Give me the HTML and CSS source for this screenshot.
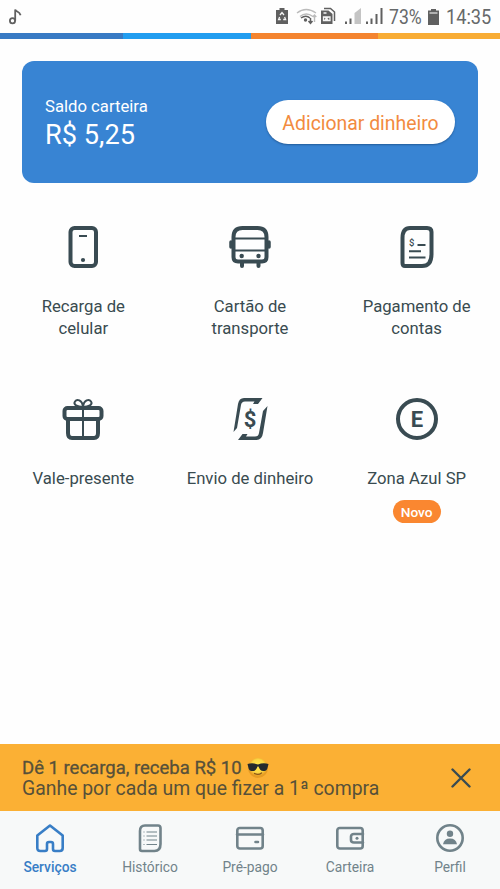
FILE: index.html
```html
<!DOCTYPE html>
<html lang="pt-BR">
<head>
<meta charset="utf-8">
<title>Serviços</title>
<link rel="stylesheet" href="styles.css">
</head>
<body>
<header class="status">
  <svg class="note" width="14" height="18" viewBox="0 0 14 18"><circle cx="4.500" cy="12.700" r="2.600"/><path d="M7.200 12.700V1.500C7.800 4 11.300 3 12.600 7.200"/></svg>
  <div class="indicators">
    <svg width="107" height="20" viewBox="0 0 107 20">
      <path class="solid" d="M0 3h3.500V1h5v2H12v14H0z"/><path class="cut" d="M4 8L6 5.500 8 8M8.600 10l1 2.500H7.200M4.800 12.500H2.600l1-2.500"/>
      <path class="light" d="M21 6Q30-1 40 6M24 9.500Q30 4.500 37 9.500M38.500 8v7M36.700 10l1.800-2 1.800 2"/><path class="line" d="M25 11Q30 7.500 34 11M34.500 11v5M32.500 14l2 2.300 2-2.300"/><circle class="solid" cx="29.500" cy="13" r="1.700"/>
      <path class="line" d="M48 1.500h6.500L58.500 5v9"/><path class="solid" d="M45 3.500h7.500L56.500 7v10H45z"/><path class="cut" d="M47.500 10h6.500v3.500h-6.500zM48.500 10l4 3.500M52.500 10l-4 3.500M47.500 6h3"/>
      <path class="solid" d="M69 14.500h2V17h-2zM73.500 11.500h2V17h-2z"/><path class="pale" d="M78.500 6L85 1v16h-6.500z"/>
      <path class="solid" d="M90 14.500h2V17h-2zM94.500 11.500h2V17h-2zM99.500 7h2v10h-2zM104.500 1h2v16h-2z"/>
    </svg>
    <span class="percent">73%</span>
    <svg width="12" height="18" viewBox="0 0 12 18"><path class="solid" d="M0 2.500h3V1h5v1.500h3V17H0z"/><path class="paleline" d="M1.500 5h8"/></svg>
    <span class="clock">14:35</span>
  </div>
</header>
<div class="stripe"><i></i><i></i><i></i><i></i></div>
<main>
  <section class="wallet">
    <div class="funds"><div class="wallet-label">Saldo carteira</div><div class="balance">R$ 5,25</div></div>
    <button class="add">Adicionar dinheiro</button>
  </section>
  <section class="services">
    <a class="service"><svg width="44" height="44" viewBox="0 0 44 44"><rect class="bold" x="9.500" y="3" width="25.500" height="38" rx="4"/><path class="thin" d="M18 11h8"/><circle class="dot" cx="22" cy="35" r="2.100"/></svg><span>Recarga de celular</span></a>
    <a class="service"><svg width="44" height="44" viewBox="0 0 44 44"><path class="bold" d="M5.500 32V12Q5.500 3 14.500 3h15Q38.500 3 38.500 12v20q0 4.500-4.500 4.500H10Q5.500 36.500 5.500 32zM14 37v4M30.500 37v4"/><path class="thin" d="M5 13.500h34M5 25.500h34"/><path class="bold mirror" d="M3 17v5M41 17v5"/><circle class="dot" cx="13.700" cy="31" r="2.200"/><circle class="dot" cx="30.500" cy="31" r="2.200"/></svg><span>Cartão de transporte</span></a>
    <a class="service"><svg width="44" height="44" viewBox="0 0 44 44"><path class="bold" d="M7.500 13Q7.500 3 15 3h17q4.500 0 4.500 4v22Q36.500 41 27 41H10q-2.500 0-2.500-3z"/><path class="thin" d="M22.500 20h8M14 26.300h12M14 32.500h16.500"/><text class="bill-dollar" x="16.800" y="20.500">$</text></svg><span>Pagamento de contas</span></a>
    <a class="service"><svg width="44" height="44" viewBox="0 0 44 44"><rect class="bold" x="3.500" y="11" width="37" height="11" rx="3"/><path class="bold" d="M7 22v14Q7 41 11 41h22q4 0 4-5V22"/><path class="thin" d="M22 11v30M22 10C16 10 12 7.500 14 4.500s7-1.500 8 4.500c1-6 6-7.500 8-4.500s-2 5.500-8 5.500z"/></svg><span>Vale-presente</span></a>
    <a class="service"><svg width="44" height="44" viewBox="0 0 44 44"><path class="dot" d="M5.500 35L10 7Q11 1 16 1h18.500l-4.500 6h-5l1.500-2.500H17Q13.500 4.500 13 8L9 31zM39.500 9L35 36Q34 43 28.500 43H10l4.500-6h5L18 39.500h9q3.500 0 4-3.500L35 14z"/><text class="dollar" transform="translate(22 29.800)">$</text></svg><span>Envio de dinheiro</span></a>
    <a class="service"><svg width="44" height="44" viewBox="0 0 44 44"><circle class="bold" cx="22" cy="22" r="19"/><text class="zone" x="22" y="30">E</text></svg><span>Zona Azul SP</span><b class="new">Novo</b></a>
  </section>
</main>
<aside class="promo">
  <div><div class="promo-title">Dê 1 recarga, receba R$ 10
    <svg class="emoji" width="22" height="22" viewBox="0 0 22 22"><defs><radialGradient id="face" cx=".5" cy=".4"><stop offset="0" stop-color="#ffe84c"/><stop offset=".65" stop-color="#fcd744"/><stop offset="1" stop-color="#e79c23"/></radialGradient></defs><circle cx="11" cy="11" r="10" fill="url(#face)"/><path fill="#242b2e" d="M.500 7Q6 5.500 11 7.500 16 5.500 21.500 7l-.5 2c-.8 4-1.500 5-4.500 5-3 0-4-2-5-4.500h-1C9.500 12 8.500 14 5.500 14 2.500 14 1.800 13 1 9z"/><path fill="none" stroke="#8b5817" stroke-linecap="round" stroke-width="1.300" d="M7.500 16.500q4 2 7-.5"/></svg></div>
  <div class="promo-text">Ganhe por cada um que fizer a 1ª compra</div></div>
  <svg class="close" width="20" height="20" viewBox="0 0 20 20"><path d="M1.500 1.500l17 17M18.500 1.500l-17 17"/></svg>
</aside>
<nav>
  <a class="tab active"><svg width="30" height="30" viewBox="0 0 30 30"><path d="M2.300 12.500L15 2.500l12.700 10V25q0 3-3 3H20q-2 0-2-2v-5q0-2-2-2h-2q-2 0-2 2v5q0 2-2 2H5.300q-3 0-3-3z"/></svg><span>Serviços</span></a>
  <a class="tab"><svg width="30" height="30" viewBox="0 0 30 30"><path d="M5 8Q5 2.500 10 2.500h13q2.500 0 2.500 2.500v16q0 7-6 7H7q-2 0-2-2z"/><path class="fine" d="M11.500 9h10.500M11.500 13h10.500M11.500 17h10.500M11.500 21.500h10.500M8.500 9h1M8.500 13h1M8.500 17h1M8.500 21.500h1"/></svg><span>Histórico</span></a>
  <a class="tab"><svg width="30" height="30" viewBox="0 0 30 30"><rect x="2.300" y="5" width="25.400" height="20.500" rx="2.500"/><path d="M2 11.500h26M20.500 19h2.500"/></svg><span>Pré-pago</span></a>
  <a class="tab"><svg width="30" height="30" viewBox="0 0 30 30"><rect x="2.300" y="5" width="25.400" height="20.500" rx="2.500"/><path d="M28 11h-9q-3 0-3 2.500v3.500q0 2.500 3 2.500h9"/><circle class="fill" cx="22" cy="15.300" r="1.500"/></svg><span>Carteira</span></a>
  <a class="tab"><svg width="30" height="30" viewBox="0 0 30 30"><circle cx="15" cy="15" r="12.700"/><circle class="fill" cx="15" cy="10.800" r="3.200"/><path class="fill" d="M8 21.300q1-5.800 7-5.800t7 5.800z"/></svg><span>Perfil</span></a>
</nav>
</body>
</html>
```
FILE: styles.css
```css
* { box-sizing: border-box; }
body { margin: 0; height: 889px; display: flex; flex-direction: column; background: #fefefe; color: #394b50; font-family: Roboto, "Liberation Sans", sans-serif; overflow: hidden; }
svg { display: block; flex: none; }
.status { height: 33px; padding: 0 8px; display: flex; justify-content: space-between; align-items: center; color: #66696a; }
.note { fill: none; stroke: #606060; stroke-width: 1.8; }
.indicators { display: flex; align-items: center; gap: 6px; font-size: 20px; white-space: nowrap; }
.indicators .solid { fill: #606060; }
.indicators .cut { fill: none; stroke: #f5f5f5; stroke-width: 1.3; }
.indicators .line { fill: none; stroke: #606060; stroke-width: 1.5; }
.indicators .light { fill: none; stroke: #bbb; stroke-width: 1.4; }
.indicators .pale { fill: #c4c4c4; }
.indicators .paleline { stroke: #ccc; stroke-width: 1.5; }
.percent { width: 33px; transform: scaleX(.88); transform-origin: left; }
.clock { width: 46px; transform: scaleX(.91); transform-origin: left; }
.stripe { height: 6px; display: grid; grid-template-columns: 123px 128px 127px 122px; }
.stripe i:nth-child(1) { background: #387ac4; }
.stripe i:nth-child(2) { background: #219df0; }
.stripe i:nth-child(3) { background: #f4842f; }
.stripe i:nth-child(4) { background: #f8ac34; }
main { flex: 1; }
.wallet { height: 122px; margin: 22px 22px 0; padding: 0 23px; border-radius: 12px; background: #3884d3; color: #fff; display: flex; align-items: center; justify-content: space-between; }
.funds { padding-top: 2px; }
.wallet-label { font-size: 16.7px; line-height: 22px; margin-top: 2px; }
.balance { font-size: 27.2px; line-height: 35px; white-space: nowrap; }
.add { width: 189px; height: 44px; padding: 3px 0 0; border: 0; border-radius: 22px; background: #fff; color: #f28b40; font: 19.4px Roboto, sans-serif; box-shadow: 0 1px 2px #235b98; white-space: nowrap; }
.services { display: grid; grid-template-columns: repeat(3, 1fr); grid-auto-rows: 172px; margin-top: 42px; }
.service { display: flex; flex-direction: column; align-items: center; font-size: 16.7px; line-height: 22px; text-align: center; }
.service span { margin-top: 27px; max-width: 132px; }
.bold { fill: none; stroke: #394b52; stroke-width: 4; stroke-linecap: round; stroke-linejoin: round; }
.mirror { stroke-width: 3.5; }
.thin { fill: none; stroke: #394b52; stroke-width: 2; }
.dot { fill: #394b52; }
.bill-dollar, .dollar, .zone { fill: #394b52; text-anchor: middle; }
.bill-dollar { font-size: 9.5px; font-weight: 500; }
.dollar { font-size: 22px; font-weight: 700; }
.zone { font-size: 22px; font-weight: 700; }
.new { margin-top: 10px; width: 48px; height: 23px; border-radius: 12px; background: #fa8730; color: #fff; font-size: 13.7px; font-weight: 500; line-height: 24px; }
.promo { height: 67px; padding: 1px 29px 0 22px; display: flex; align-items: center; justify-content: space-between; background: #fbb034; color: #575039; white-space: nowrap; }
.promo-title { display: flex; align-items: center; gap: 5px; font-size: 18.5px; line-height: 22px; -webkit-text-stroke: .3px; }
.promo-title svg { -webkit-text-stroke: 0; }
.promo-text { font-size: 19.4px; line-height: 20px; }
.close { fill: none; stroke: #394b52; stroke-width: 2.4; stroke-linecap: round; }
nav { height: 78px; display: grid; grid-template-columns: repeat(5, 1fr); background: #f7f9f9; color: #71838a; }
.tab { display: flex; flex-direction: column; align-items: center; padding-top: 12px; font-size: 13.8px; line-height: 18px; }
.tab span { margin-top: 5px; }
.tab svg { fill: none; stroke: currentColor; stroke-width: 2.6; stroke-linejoin: round; stroke-linecap: round; }
.tab .fine { stroke-width: 1.2; stroke-linecap: butt; }
.tab .fill { fill: currentColor; stroke: none; }
.active { color: #387ec6; font-weight: 500; }
```
